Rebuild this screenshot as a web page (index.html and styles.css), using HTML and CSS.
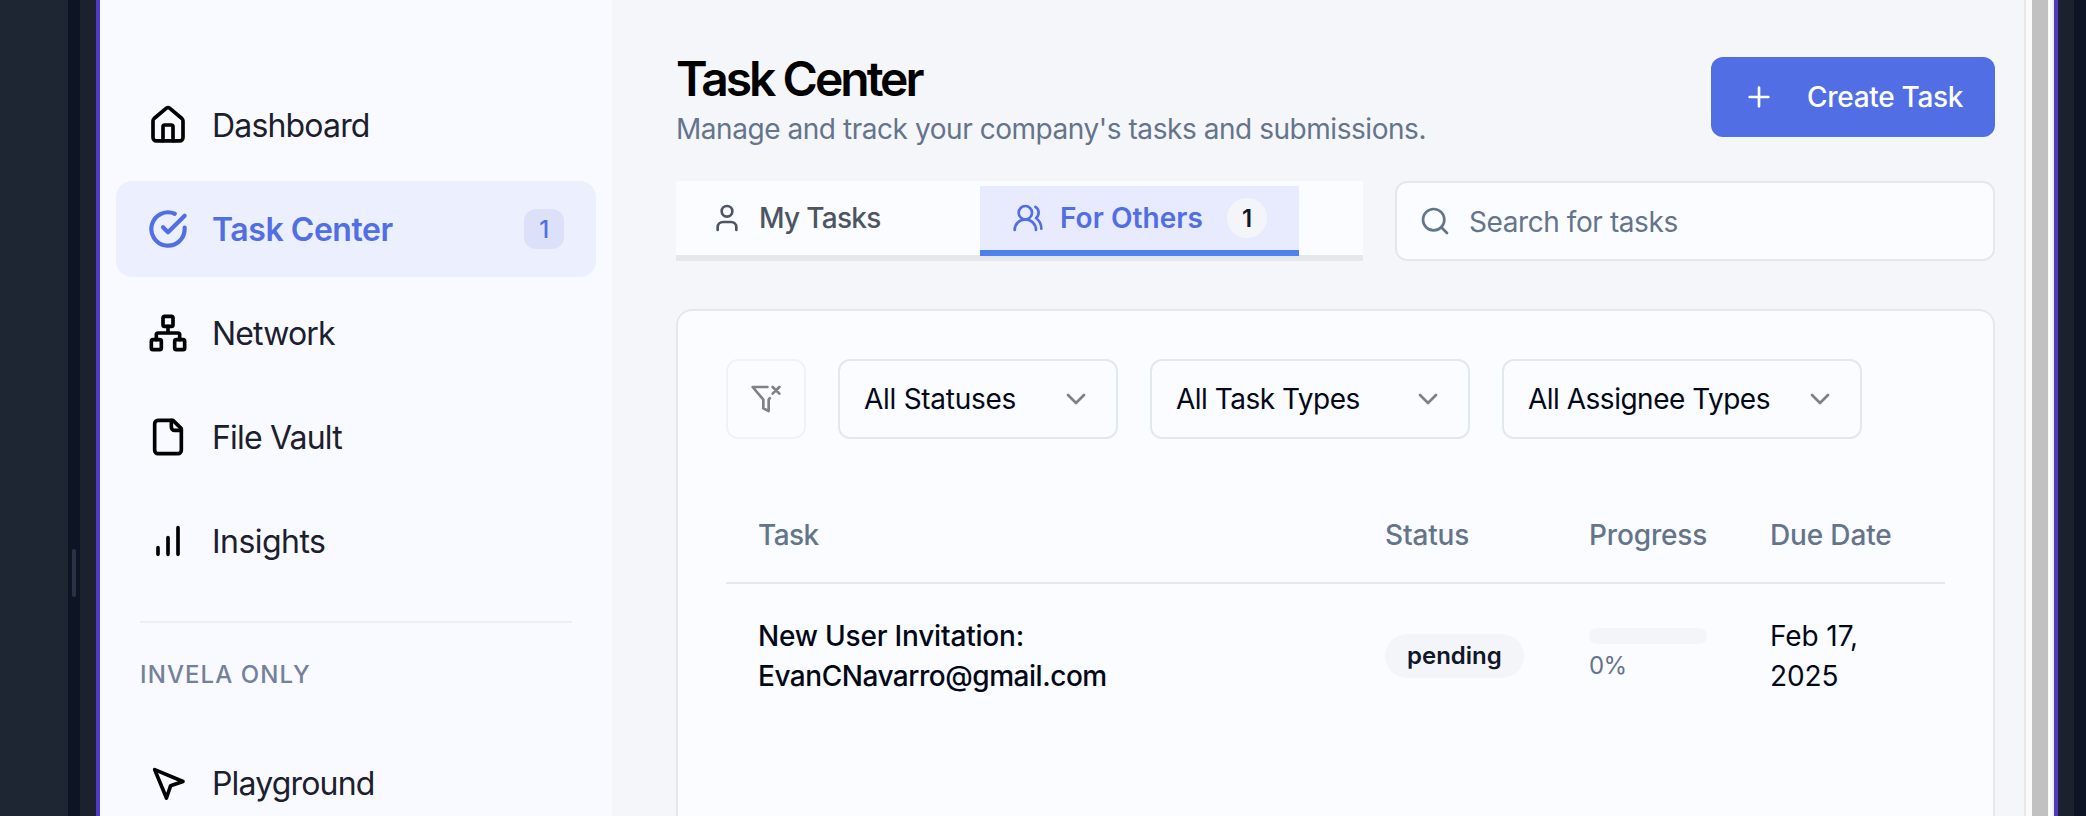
FILE: index.html
```
<!DOCTYPE html>
<html lang="en">
<head>
<meta charset="utf-8">
<title>Task Center</title>
<link rel="stylesheet" href="styles.css">
</head>
<body>
<div class="screen">
  <div class="rail"></div>
  <div class="splitter"><span class="grip"></span></div>
  <div class="gap-left"></div>
  <div class="frame">
    <aside class="sidebar">
      <nav class="nav">
        <a class="item"><svg class="ico" viewBox="0 0 24 24"><path d="M3 9.500a2 2 0 0 1 .65-1.400l7.400-6.200a1.500 1.500 0 0 1 1.900 0l7.400 6.200A2 2 0 0 1 21 9.500V19.500a2 2 0 0 1-2 2H5a2 2 0 0 1-2-2z"/><path d="M9 21.500v-8.500a1 1 0 0 1 1-1h4a1 1 0 0 1 1 1v8.500"/></svg><span>Dashboard</span></a>
        <a class="item active"><svg class="ico" viewBox="0 0 24 24"><path d="M22 11.080V12a10 10 0 1 1-5.930-9.140"/><path d="m9 11 3 3L22 4"/></svg><span>Task Center</span><b class="count">1</b></a>
        <a class="item"><svg class="ico" viewBox="0 0 24 24"><rect x="16" y="16" width="6" height="6" rx="1"/><rect x="2" y="16" width="6" height="6" rx="1"/><rect x="9" y="2" width="6" height="6" rx="1"/><path d="M5 16v-3a1 1 0 0 1 1-1h12a1 1 0 0 1 1 1v3M12 12V8"/></svg><span>Network</span></a>
        <a class="item"><svg class="ico" viewBox="0 0 24 24"><path d="M15 2H6a2 2 0 0 0-2 2v16a2 2 0 0 0 2 2h12a2 2 0 0 0 2-2V7Z"/><path d="M14 2v4a2 2 0 0 0 2 2h4"/></svg><span>File Vault</span></a>
        <a class="item"><svg class="ico" viewBox="0 0 24 24"><path d="M12 20V10M18 20V4M6 20v-4"/></svg><span class="looser">Insights</span></a>
      </nav>
      <hr class="rule">
      <div class="section">INVELA ONLY</div>
      <a class="item"><svg class="ico" viewBox="0 0 24 24"><path d="m4 4 7.070 17 2.510-7.390L21 11.070z"/></svg><span>Playground</span></a>
    </aside>
    <main class="main">
      <header class="head">
        <div>
          <h1 class="title">Task Center</h1>
          <p class="sub">Manage and track your company's tasks and submissions.</p>
        </div>
        <button class="create"><svg class="ico32" viewBox="0 0 24 24"><path d="M5 12h14M12 5v14"/></svg><span>Create Task</span></button>
      </header>
      <div class="tools">
        <div class="tabs">
          <div class="tab mine"><svg class="ico32" viewBox="0 0 24 24"><circle cx="12" cy="7" r="4"/><path d="M19 21v-2a4 4 0 0 0-4-4H9a4 4 0 0 0-4 4v2"/></svg><span>My Tasks</span></div>
          <div class="tab others"><svg class="ico32" viewBox="0 0 24 24"><path d="M18 21a8 8 0 0 0-16 0"/><circle cx="10" cy="8" r="5"/><path d="M22 20c0-3.370-2-6.500-4-8a5 5 0 0 0-.45-8.300"/></svg><span class="tab-label">For Others</span><b class="pill">1</b></div>
        </div>
        <div class="search"><svg class="ico32" viewBox="0 0 24 24"><circle cx="11" cy="11" r="8"/><path d="m21 21-4.300-4.300"/></svg><span>Search for tasks</span></div>
      </div>
      <section class="card">
        <div class="filters">
          <button class="clear"><svg class="ico32" viewBox="0 0 24 24"><path d="M13.013 3H2l8 9.460V19l4 2v-8.540l.9-1.055M22 3l-5 5M17 3l5 5"/></svg></button>
          <div class="select s1"><span>All Statuses</span><svg class="chev" viewBox="0 0 24 24"><path d="m6 9 6 6 6-6"/></svg></div>
          <div class="select s2"><span>All Task Types</span><svg class="chev" viewBox="0 0 24 24"><path d="m6 9 6 6 6-6"/></svg></div>
          <div class="select s3"><span>All Assignee Types</span><svg class="chev" viewBox="0 0 24 24"><path d="m6 9 6 6 6-6"/></svg></div>
        </div>
        <div class="row thead"><span class="tight">Task</span><span>Status</span><span>Progress</span><span>Due Date</span></div>
        <div class="row tbody">
          <span class="name"><span class="invite">New User Invitation:</span><br>EvanCNavarro@gmail.com</span>
          <b class="status">pending</b>
          <div class="progress"><div class="bar"></div><span class="pct">0%</span></div>
          <span class="due">Feb 17,<br>2025</span>
        </div>
      </section>
    </main>
    <div class="scroll"><div class="thumb"></div></div>
  </div>
  <div class="gap-right"></div>
  <div class="edge"></div>
</div>
</body>
</html>
```
FILE: styles.css
```
* { box-sizing: border-box; }
body { margin: 0; font-family: Inter, "Liberation Sans", sans-serif; color: #020817; }
.screen { display: flex; width: 2086px; height: 816px; overflow: hidden; background: #0d1423; }
.rail { width: 68px; background: #1e2533; }
.splitter { width: 12px; background: #0d1423; display: flex; justify-content: center; padding-top: 549px; }
.grip { width: 4px; height: 48px; border-radius: 2px; background: #2c3245; }
.gap-left { width: 16px; background: #1c212e; }
.frame { width: 1962px; display: flex; border: solid #4f39c5; border-width: 0 4px; background: #f5f6fa; }
.gap-right { width: 16px; background: #1c212e; }
.edge { flex: 1; background: #0d1423; }

svg { fill: none; stroke: currentColor; stroke-width: 2; stroke-linecap: round; stroke-linejoin: round; flex: none; display: block; }
.ico { width: 40px; height: 40px; stroke-width: 2.2; }
.ico32 { width: 32px; height: 32px; }
.chev { width: 32px; height: 32px; color: #808187; }

.sidebar { width: 512px; flex: none; background: #f9faff; padding: 77px 16px 0; }
.nav { display: flex; flex-direction: column; gap: 8px; }
.item { height: 96px; padding: 0 32px; display: flex; align-items: center; gap: 24px; border-radius: 16px; font-size: 32px; letter-spacing: -0.83px; color: #1c202d; white-space: nowrap; }
.item .ico { color: #000; }
.item.active { background: #ebeffe; color: #526ee5; font-weight: 600; letter-spacing: -0.45px; }
.item.active .ico { color: #526ee5; stroke-width: 2.5; }
.looser { letter-spacing: -0.55px; }
.count { margin-left: auto; width: 40px; height: 40px; border-radius: 12px; background: #dce1f9; font-size: 24px; font-weight: 500; display: flex; align-items: center; justify-content: center; }
.rule { border: 0; height: 2px; background: #edeef4; margin: 32px 24px 0; }
.section { margin: 36px 24px 0; height: 32px; line-height: 32px; font-size: 24px; font-weight: 500; letter-spacing: 1.1px; color: #73819a; }
.section + .item { margin-top: 44px; }

.main { width: 1412px; flex: none; padding: 57px 29px 0 64px; }
.head { display: flex; justify-content: space-between; height: 124px; }
.title { margin: 0; font-size: 48px; line-height: 43px; font-weight: 600; letter-spacing: -3px; color: #000; }
.sub { margin: 9px 0 0; font-size: 28px; line-height: 40px; letter-spacing: -0.45px; color: #64748b; white-space: nowrap; }
.create { width: 284px; height: 80px; border: 0; border-radius: 12px; background: #526ee5; color: #fff; font: 500 28px Inter, sans-serif; letter-spacing: -0.3px; display: flex; align-items: center; padding: 0 32px; gap: 32px; white-space: nowrap; }
.tools { display: flex; gap: 32px; }
.tabs { width: 687px; height: 80px; background: #fbfcff; border-bottom: 6px solid #e5e7eb; display: flex; padding-top: 5px; }
.tab { display: flex; align-items: center; height: 70px; font-size: 28px; font-weight: 500; white-space: nowrap; }
.mine { width: 304px; padding: 0 0 6px 35px; gap: 16px; letter-spacing: -0.7px; color: #4b5563; }
.others { width: 319px; padding-left: 32px; gap: 16px; background: #e8ebfd; border-bottom: 6px solid #4f80f0; color: #526ee5; }
.tab-label { width: 143px; font-weight: 600; letter-spacing: 0.05px; }
.pill { margin-left: 8px; width: 40px; height: 40px; border-radius: 20px; background: #f4f5f9; color: #0f172a; font-size: 24px; font-weight: 600; display: flex; align-items: center; justify-content: center; }
.search { width: 600px; height: 80px; border: 2px solid #e2e8f0; border-radius: 12px; background: #fbfcff; display: flex; align-items: center; padding-left: 22px; gap: 18px; font-size: 28px; letter-spacing: -0.42px; color: #64748b; }
.search span { padding-top: 2px; }
.card { margin-top: 48px; height: 620px; border: 2px solid #e2e8f0; border-radius: 16px; background: #fbfcff; padding: 48px; }
.filters { display: flex; gap: 32px; }
.clear { width: 80px; height: 80px; border: 2px solid #f0f2f8; border-radius: 12px; background: none; color: #808187; padding: 0; display: flex; align-items: center; justify-content: center; }
.select { height: 80px; border: 2px solid #e2e8f0; border-radius: 12px; display: flex; justify-content: space-between; align-items: center; padding: 0 24px; font-size: 28px; letter-spacing: -0.5px; white-space: nowrap; }
.s1 { width: 280px; letter-spacing: -0.28px; }
.s2 { width: 320px; }
.s3 { width: 360px; }
.row { display: grid; grid-template-columns: 627px 204px 181px 1fr; padding-left: 32px; font-size: 28px; line-height: 40px; }
.thead { margin-top: 48px; height: 97px; align-items: center; border-bottom: 2px solid #e2e8f0; color: #64748b; font-weight: 500; letter-spacing: -0.15px; }
.tight { letter-spacing: -0.6px; }
.tbody { margin-top: 32px; align-items: center; }
.name { font-weight: 500; letter-spacing: -0.47px; }
.invite { letter-spacing: -0.2px; }
.status { justify-self: start; display: flex; align-items: center; height: 44px; padding: 0 22px; border-radius: 22px; background: #f4f5f9; font-size: 24px; font-weight: 600; color: #0f172a; }
.progress { width: 118px; padding-bottom: 2px; }
.bar { height: 16px; border-radius: 8px; background: #f4f5f9; }
.pct { display: block; margin-top: 6px; font-size: 24px; line-height: 32px; letter-spacing: -0.6px; color: #64748b; }
.due { letter-spacing: -0.1px; }
.scroll { width: 30px; background: #fafafa; border: solid #e8e8e8; border-width: 0 2px 0 2px; border-right-color: #f0f0f0; padding: 0 6px; }
.thumb { width: 16px; height: 816px; background: #c1c1c1; }
```
